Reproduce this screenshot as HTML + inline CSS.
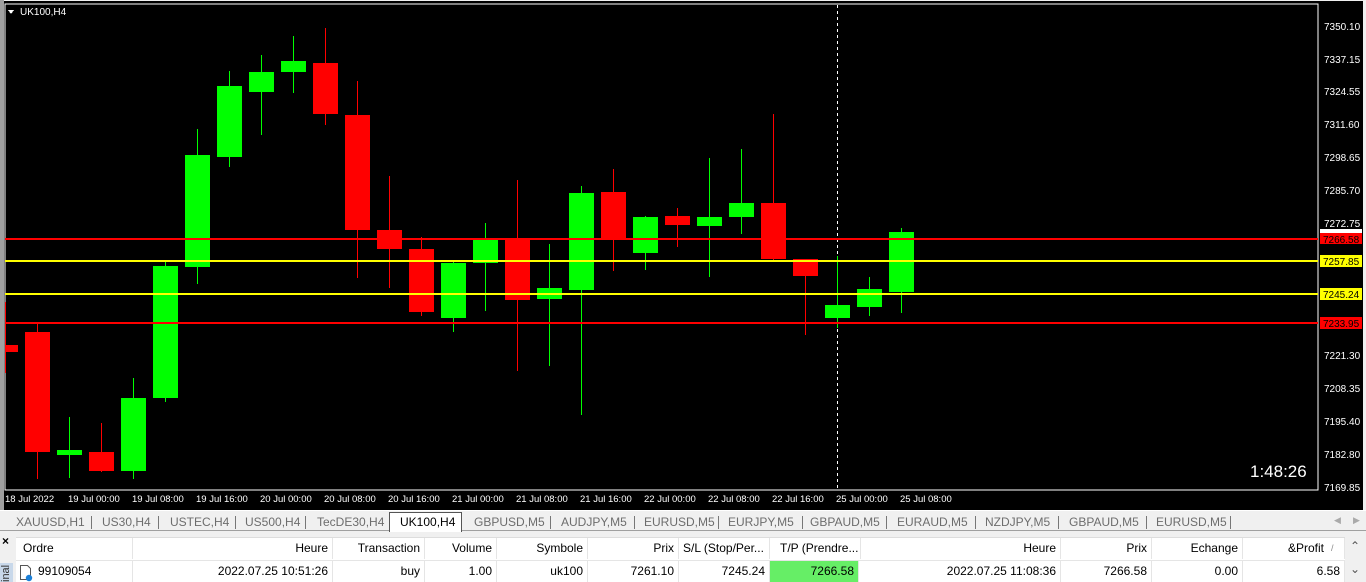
<!DOCTYPE html>
<html><head><meta charset="utf-8"><style>
*{margin:0;padding:0;box-sizing:border-box}
body{width:1366px;height:582px;overflow:hidden;background:#f0f0f0;font-family:"Liberation Sans",sans-serif;position:relative}
.ax{font-family:"Liberation Sans",sans-serif;font-size:10px;fill:#fff}
.tab{position:absolute;top:515px;font-size:12px;color:#6d6d6d}
.sep{position:absolute;top:516px;width:1px;height:13px;background:#777}
.c{position:absolute;font-size:12px;color:#000;height:21px;line-height:21px;padding:0 4px;border-right:1px solid #e5e5e5;overflow:hidden;white-space:nowrap;text-align:right}
</style></head><body>
<svg width="1366" height="511" style="position:absolute;left:0;top:0" shape-rendering="crispEdges">
<rect x="0" y="0" width="1366" height="511" fill="#f0f0f0"/>
<rect x="0" y="0" width="4" height="511" fill="#a0a0a0"/>
<rect x="4" y="1" width="1359" height="509" fill="#000"/>
<rect x="5" y="4" width="1313" height="486" fill="none" stroke="#fff" stroke-width="1"/>
<line x1="837.5" y1="5" x2="837.5" y2="490" stroke="#fff" stroke-dasharray="3,3"/>
<g id="c"></g>
<line x1="5" y1="239" x2="1318" y2="239" stroke="#f00" stroke-width="2"/>
<line x1="5" y1="261" x2="1318" y2="261" stroke="#ff0" stroke-width="2"/>
<line x1="5" y1="294" x2="1318" y2="294" stroke="#ff0" stroke-width="2"/>
<line x1="5" y1="323" x2="1318" y2="323" stroke="#f00" stroke-width="2"/>
<g class="ax">
<text x="1324" y="30">7350.10</text><text x="1324" y="63">7337.15</text><text x="1324" y="95">7324.55</text><text x="1324" y="128">7311.60</text><text x="1324" y="161">7298.65</text><text x="1324" y="194">7285.70</text><text x="1324" y="227">7272.75</text><text x="1324" y="359">7221.30</text><text x="1324" y="392">7208.35</text><text x="1324" y="425">7195.40</text><text x="1324" y="458">7182.80</text><text x="1324" y="491">7169.85</text>
</g>
<rect x="1320" y="229" width="42" height="6" fill="#fff"/>
<rect x="1320" y="233" width="42" height="11" fill="#f00"/><text x="1323" y="243" class="ax" style="fill:#000">7266.58</text>
<rect x="1320" y="255" width="42" height="12" fill="#ff0"/><text x="1323" y="265" class="ax" style="fill:#000">7257.85</text>
<rect x="1320" y="288" width="42" height="12" fill="#ff0"/><text x="1323" y="298" class="ax" style="fill:#000">7245.24</text>
<rect x="1320" y="317" width="42" height="12" fill="#f00"/><text x="1323" y="327" class="ax" style="fill:#000">7233.95</text>
<g class="ax" style="font-size:9.5px">
<text x="5" y="502">18 Jul 2022</text><text x="68" y="502">19 Jul 00:00</text><text x="132" y="502">19 Jul 08:00</text><text x="196" y="502">19 Jul 16:00</text><text x="260" y="502">20 Jul 00:00</text><text x="324" y="502">20 Jul 08:00</text><text x="388" y="502">20 Jul 16:00</text><text x="452" y="502">21 Jul 00:00</text><text x="516" y="502">21 Jul 08:00</text><text x="580" y="502">21 Jul 16:00</text><text x="644" y="502">22 Jul 00:00</text><text x="708" y="502">22 Jul 08:00</text><text x="772" y="502">22 Jul 16:00</text><text x="836" y="502">25 Jul 00:00</text><text x="900" y="502">25 Jul 08:00</text>
</g>
<path d="M8 10h6l-3 4z" fill="#fff"/>
<text x="20" y="15" class="ax" style="font-size:10px">UK100,H4</text>
<text x="1250" y="477" class="ax" style="font-size:17px">1:48:26</text>
<line x1="0" y1="510.5" x2="1366" y2="510.5" stroke="#fff"/>
</svg>
<script>
var d=[[0,345,352,302,373,'r'],[1,332,452,324,479,'r'],[2,450,455,417,478,'g'],[3,452,471,423,472,'r'],[4,398,471,378,479,'g'],[5,266,398,261,402,'g'],[6,155,267,129,284,'g'],[7,86,157,71,167,'g'],[8,72,92,55,135,'g'],[9,61,72,36,93,'g'],[10,63,114,28,125,'r'],[11,115,230,81,278,'r'],[12,230,249,176,288,'r'],[13,249,312,237,316,'r'],[14,263,318,260,332,'g'],[15,240,263,223,311,'g'],[16,238,300,180,371,'r'],[17,288,299,244,366,'g'],[18,193,290,186,415,'g'],[19,192,239,169,271,'r'],[20,217,253,216,270,'g'],[21,216,225,208,247,'r'],[22,217,226,158,277,'g'],[23,203,217,149,234,'g'],[24,203,259,114,261,'r'],[25,259,276,259,335,'r'],[26,305,318,256,328,'g'],[27,289,307,277,316,'g'],[28,232,292,228,313,'g']];
var s='';d.forEach(function(a){var cx=37+32*(a[0]-1),col=a[5]=='r'?'#f00':'#0f0';var bx=cx-12,bw=25;if(a[0]==0){cx=5;bx=5;bw=13;}
s+='<rect x="'+cx+'" y="'+a[3]+'" width="1" height="'+(a[4]-a[3])+'" fill="'+col+'"/><rect x="'+bx+'" y="'+a[1]+'" width="'+bw+'" height="'+(a[2]-a[1])+'" fill="'+col+'"/>';});
document.getElementById('c').innerHTML=s;
</script>
<div style="position:absolute;left:0;top:511px;width:1366px;height:20px;background:#f0f0f0;border-bottom:1px solid #a0a0a0"></div>
<div style="position:absolute;left:389px;top:512px;width:73px;height:20px;background:#fff;border:1px solid #555;border-bottom:none"></div>
<span class="tab" style="left:16px">XAUUSD,H1</span><span class="sep" style="left:91px"></span>
<span class="tab" style="left:102px">US30,H4</span><span class="sep" style="left:158px"></span>
<span class="tab" style="left:170px">USTEC,H4</span><span class="sep" style="left:235px"></span>
<span class="tab" style="left:245px">US500,H4</span><span class="sep" style="left:305px"></span>
<span class="tab" style="left:317px">TecDE30,H4</span>
<span class="tab" style="left:400px;color:#000">UK100,H4</span>
<span class="tab" style="left:474px">GBPUSD,M5</span><span class="sep" style="left:550px"></span>
<span class="tab" style="left:561px">AUDJPY,M5</span><span class="sep" style="left:634px"></span>
<span class="tab" style="left:644px">EURUSD,M5</span><span class="sep" style="left:718px"></span>
<span class="tab" style="left:728px">EURJPY,M5</span><span class="sep" style="left:802px"></span>
<span class="tab" style="left:810px">GBPAUD,M5</span><span class="sep" style="left:886px"></span>
<span class="tab" style="left:897px">EURAUD,M5</span><span class="sep" style="left:975px"></span>
<span class="tab" style="left:985px">NZDJPY,M5</span><span class="sep" style="left:1058px"></span>
<span class="tab" style="left:1069px">GBPAUD,M5</span><span class="sep" style="left:1146px"></span>
<span class="tab" style="left:1156px">EURUSD,M5</span><span class="sep" style="left:1230px"></span>
<span class="tab" style="left:1334px;font-size:9px;color:#aaa">◀</span><span class="tab" style="left:1353px;font-size:9px;color:#aaa">▶</span>
<div style="position:absolute;left:0;top:532px;width:1366px;height:50px;background:#f0f0f0"></div>
<div style="position:absolute;left:2px;top:534px;font-size:12px;font-weight:bold">×</div>
<div style="position:absolute;left:0;top:563px;width:13px;height:19px;background:#c8d8ea;font-size:11px;color:#333;writing-mode:vertical-rl;transform:rotate(180deg);line-height:13px">inal</div>
<div style="position:absolute;left:16px;top:537px;width:1329px;height:45px;background:#fff;border-top:1px solid #ddd"></div>
<div style="position:absolute;left:16px;top:560px;width:1329px;height:1px;background:#e5e5e5"></div>
<div class="c" style="left:17px;top:538px;width:116px;text-align:left;padding-left:6px">Ordre</div>
<div class="c" style="left:133px;top:538px;width:200px">Heure</div>
<div class="c" style="left:333px;top:538px;width:92px">Transaction</div>
<div class="c" style="left:425px;top:538px;width:72px">Volume</div>
<div class="c" style="left:497px;top:538px;width:91px">Symbole</div>
<div class="c" style="left:588px;top:538px;width:91px">Prix</div>
<div class="c" style="left:679px;top:538px;width:91px;text-align:left">S/L (Stop/Per...</div>
<div class="c" style="left:770px;top:538px;width:91px;text-align:left;padding-left:10px">T/P (Prendre...</div>
<div class="c" style="left:861px;top:538px;width:200px">Heure</div>
<div class="c" style="left:1061px;top:538px;width:91px">Prix</div>
<div class="c" style="left:1152px;top:538px;width:91px">Echange</div>
<div class="c" style="left:1243px;top:538px;width:102px;padding-right:20px">&amp;Profit</div>
<span style="position:absolute;left:1331px;top:543px;font-size:9px;color:#888">/</span>
<div class="c" style="left:17px;top:561px;width:116px;text-align:left;padding-left:21px">99109054</div>
<svg style="position:absolute;left:18px;top:564px" width="16" height="18"><path d="M2.5 1.5h7l3 3v11h-10z" fill="#fff" stroke="#555"/><circle cx="11" cy="14" r="3.2" fill="#1a7fd8"/></svg>
<div class="c" style="left:133px;top:561px;width:200px">2022.07.25 10:51:26</div>
<div class="c" style="left:333px;top:561px;width:92px">buy</div>
<div class="c" style="left:425px;top:561px;width:72px">1.00</div>
<div class="c" style="left:497px;top:561px;width:91px">uk100</div>
<div class="c" style="left:588px;top:561px;width:91px">7261.10</div>
<div class="c" style="left:679px;top:561px;width:91px">7245.24</div>
<div class="c" style="left:770px;top:561px;width:89px;background:#66ee66">7266.58</div>
<div class="c" style="left:861px;top:561px;width:200px">2022.07.25 11:08:36</div>
<div class="c" style="left:1061px;top:561px;width:91px">7266.58</div>
<div class="c" style="left:1152px;top:561px;width:91px">0.00</div>
<div class="c" style="left:1243px;top:561px;width:102px">6.58</div>
<div style="position:absolute;left:1345px;top:537px;width:21px;height:45px;background:#f0f0f0"></div>
<span style="position:absolute;left:1350px;top:539px;font-size:12px;color:#555">⌃</span>
<span style="position:absolute;left:1350px;top:562px;font-size:12px;color:#555">⌄</span>
</body></html>
